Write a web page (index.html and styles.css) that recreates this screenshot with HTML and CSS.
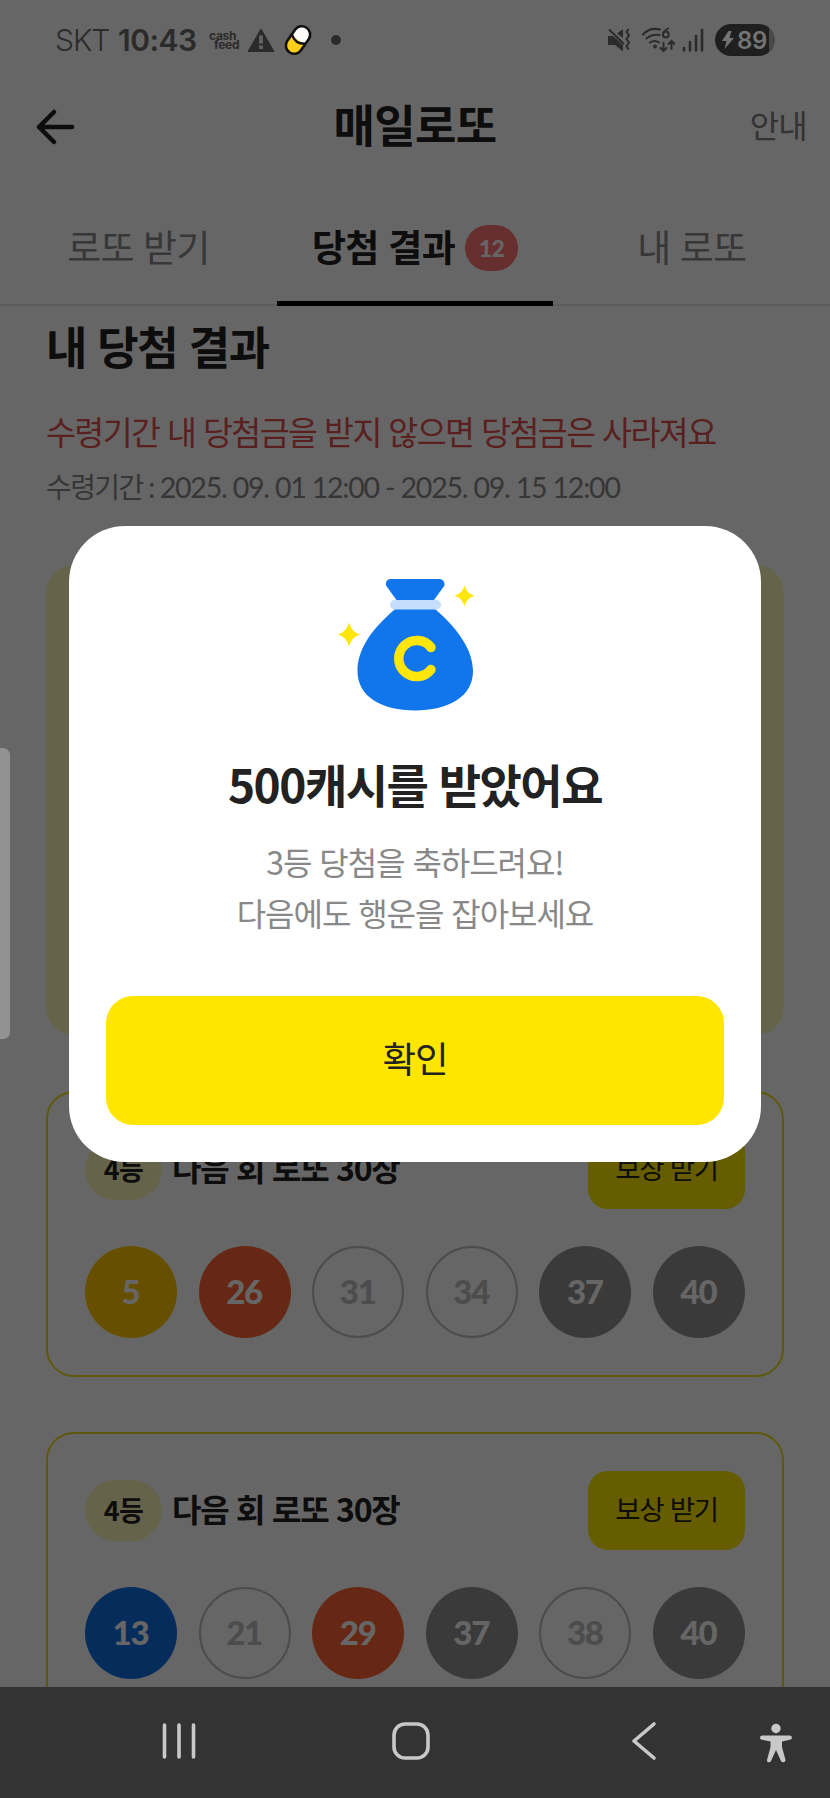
FILE: index.html
```html
<!DOCTYPE html>
<html lang="ko">
<head>
<meta charset="utf-8">
<title>매일로또</title>
<link rel="stylesheet" href="styles.css">
</head>
<body>
<div class="phone">
  <div class="screen">
    <header class="header">
      <svg class="back" viewBox="0 0 40 36" width="40" height="36"><path d="M19 3 4 18l15 15M4 18h33"/></svg>
      <h1 class="header-title">매일로또</h1>
      <span class="header-link">안내</span>
    </header>
    <nav class="tabs">
      <div class="tab">로또 받기</div>
      <div class="tab tab-active">당첨 결과<span class="badge">12</span></div>
      <div class="tab">내 로또</div>
    </nav>
    <main class="content">
      <h2 class="title">내 당첨 결과</h2>
      <p class="warning">수령기간 내 당첨금을 받지 않으면 당첨금은 사라져요</p>
      <p class="period"><span class="period-label">수령기간 :</span> 2025. 09. 01 12:00 - 2025. 09. 15 12:00</p>
      <section class="summary"></section>
      <section class="card">
        <div class="card-head">
          <span class="rank">4등</span><span class="prize">다음 회 로또 30장</span><span class="claim">보상 받기</span>
        </div>
        <div class="balls">
          <span class="ball yellow">5</span><span class="ball orange">26</span><span class="ball miss">31</span><span class="ball miss">34</span><span class="ball gray">37</span><span class="ball gray">40</span>
        </div>
      </section>
      <section class="card">
        <div class="card-head">
          <span class="rank">4등</span><span class="prize">다음 회 로또 30장</span><span class="claim">보상 받기</span>
        </div>
        <div class="balls">
          <span class="ball blue">13</span><span class="ball miss">21</span><span class="ball orange">29</span><span class="ball gray">37</span><span class="ball miss">38</span><span class="ball gray">40</span>
        </div>
      </section>
    </main>
  </div>

  <div class="overlay">
    <div class="dialog">
      <svg class="bag" viewBox="0 0 180 170" width="180" height="170">
        <path fill="#1175eb" d="M70 19h50q5 1 4.500 6.500L114 40v8c21 18 39 40 39 63 0 26-25 39.500-58 39.500S37.500 137 37.500 111c0-23 16-44 39-63v-8L66 25.500Q65 20 70 19Z"/>
        <rect x="70" y="40" width="51" height="9.500" rx="4.700" fill="#c5defb"/>
        <path d="M111 87.500a18 18 0 1 0 0 22" fill="none" stroke="#ffe60a" stroke-width="9.500" stroke-linecap="round"/>
        <path fill="#ffe60a" d="M29 62.500q2.500 9.500 11 12-8.500 2.500-11 12-2.500-9.500-11-12 8.500-2.500 11-12ZM144.500 25.500q2 8 10 10.200-8 2.300-10 10.300-2-8-10-10.300 8-2.200 10-10.200Z"/>
      </svg>
      <h3 class="dialog-title">500캐시를 받았어요</h3>
      <p class="dialog-text">3등 당첨을 축하드려요!<br>다음에도 행운을 잡아보세요</p>
      <button class="confirm">확인</button>
    </div>
  </div>

  <div class="status">
    <span class="carrier">SKT</span>
    <span class="time">10:43</span>
    <span class="cashfeed"><span>cash</span><span class="feed">feed</span></span>
    <svg class="warn" viewBox="0 0 28 24" width="28" height="24"><path d="M14 1 27 23.500H1Z" fill="#2b2b2b" stroke="#2b2b2b" stroke-linejoin="round"/><path d="M12.200 7.500h3.600v8h-3.600zM12.200 17.500h3.600v3.500h-3.600z" fill="#666"/></svg>
    <svg class="pill" viewBox="0 0 28 32" width="28" height="32"><g transform="rotate(35 14 16)"><rect x="5.700" y="1" width="16.600" height="30" rx="8.300" fill="#fff"/><path d="M5.700 16h16.600v6.700a8.300 8.300 0 0 1-16.600 0z" fill="#fdd017"/><path d="M6 15q8 6 16 0" fill="none" stroke="#111" stroke-width="2.400"/><rect x="5.700" y="1" width="16.600" height="30" rx="8.300" fill="none" stroke="#111" stroke-width="2.600"/></g></svg>
    <i class="dot"></i>
    <svg class="mute" viewBox="0 0 24 24" width="24" height="24"><path d="M1 8h5l10 9v6.500L8 17H1zM16 1v9L10 5.500z" fill="#2b2b2b"/><path d="M2 1.500l15 14.500M21.500 1l-2 3 2.500 3.500-2.500 3.500 2.500 3.500-2.500 3.500 2 3.500" fill="none" stroke="#2b2b2b" stroke-width="2"/></svg>
    <svg class="wifi" viewBox="0 0 34 26" width="34" height="26"><g fill="none" stroke="#2b2b2b" stroke-width="2" stroke-linecap="round"><path d="M2 7.500Q9 0 19 2.500M5.500 11.500Q11 6.500 18.500 8M9 15.500q4.500-3 9 0"/><path d="M27 1.500q-5 3-5 6"/><circle cx="24.800" cy="7.500" r="2.900"/><path d="M22.500 16v8m-3-3 3 3 3-3M30.500 22v-8m-3 3 3-3 3 3"/></g><circle cx="14" cy="19.500" r="1.900" fill="#2b2b2b"/></svg>
    <svg class="signal" viewBox="0 0 22 24" width="22" height="24"><path d="M2 20v2.500M8 14v8.500M14 8v14.500M20 2v20.500" stroke="#2b2b2b" stroke-width="2.600" stroke-linecap="round"/></svg>
    <span class="battery"><svg viewBox="0 0 12 18" width="12" height="18"><path d="M6.500 0 0 10h4.500L2.500 18 12 7H7.500L9.500 0Z" fill="#747474"/></svg>89</span>
  </div>

  <div class="handle"></div>

  <div class="navbar">
    <svg class="recent" viewBox="0 0 36 38" width="36" height="38"><path d="M3.500 3v32M18 3v32M32.500 3v32"/></svg>
    <svg class="home" viewBox="0 0 38 38" width="38" height="38"><rect x="2" y="2" width="34" height="34" rx="11"/></svg>
    <svg class="prev" viewBox="0 0 26 40" width="26" height="40"><path d="M23 3 3 20l20 17"/></svg>
    <svg class="person" viewBox="0 0 32 40" width="32" height="40"><circle cx="16" cy="5.500" r="4.700"/><path d="M2 12.500h28q2 .5 2 2.200t-2 2.100L22 18.500V24l3.500 13q0 2.300-2 2.300T21 38l-5-11-5 11q-.7 1.500-2.500 1.300T7 37L10.500 24v-5.500L2 16.800Q0 16.500 0 14.700t2-2.200Z"/></svg>
  </div>
</div>
</body>
</html>
```

FILE: styles.css
```css
* { box-sizing: border-box; margin: 0; padding: 0; }
body {
  font-family: "Noto Sans CJK KR", sans-serif;
  color: #222;
  background: #fff;
}
.phone { position: relative; width: 830px; height: 1798px; overflow: hidden; }
.screen { height: 1798px; padding-top: 80px; overflow: hidden; background: #fff; }

.header { display: grid; grid-template-columns: 1fr auto 1fr; align-items: center; height: 92px; padding: 0 23px; }
.back { margin: 2px 0 0 12px; fill: none; stroke: #222; stroke-width: 4.5; stroke-linecap: round; stroke-linejoin: round; }
.header-title { padding-bottom: 5px; font-size: 45px; line-height: 60px; font-weight: 700; letter-spacing: -0.7px; }
.header-link { justify-self: end; padding-bottom: 5px; font-size: 32px; line-height: 60px; letter-spacing: -0.8px; color: #808080; }

.tabs { display: flex; height: 134px; box-shadow: inset 0 -2px #e8e8ea; }
.tab { flex: 1; display: flex; justify-content: center; align-items: center; padding-top: 13px; font-size: 37px; letter-spacing: -0.9px; color: #8a8a8a; }
.tab-active { border-bottom: 5px solid #000; padding-top: 19px; font-weight: 700; font-size: 37px; letter-spacing: -0.7px; color: #222; }
.badge { display: flex; align-items: center; justify-content: center; width: 53px; height: 46px; margin: 4px 0 0 10px; border-radius: 23px; background: #ff7373; color: #fff; font: 900 23px Lato, sans-serif; letter-spacing: -0.5px; }

.content { padding: 0 46px; }
.title { margin-top: 7px; font-size: 45px; line-height: 66px; font-weight: 700; letter-spacing: -1.35px; }
.warning { margin-top: 28px; font-size: 32.500px; line-height: 48px; letter-spacing: -1.53px; color: #e05252; white-space: nowrap; }
.period { margin-top: 12px; font: 28.500px/40px Lato, "Noto Sans CJK KR", sans-serif; letter-spacing: -1.2px; color: #888; white-space: nowrap; }
.period-label { font-size: 28px; letter-spacing: -1.6px; }
.summary { height: 470px; margin-top: 58px; border-radius: 28px; background: #fff8bb; }
.card { height: 286px; margin-top: 55px; padding: 37px 37px 0; border: 2px solid #ecdc20; border-radius: 28px; }
.summary + .card { margin-top: 56px; }
.card-head { display: flex; align-items: center; }
.rank { display: flex; justify-content: center; align-items: center; width: 77px; height: 61px; padding-bottom: 3px; border-radius: 31px; background: #fff8bb; font-size: 27px; font-weight: 700; letter-spacing: -0.6px; }
.prize { margin-left: 10px; padding-bottom: 5px; font-size: 32px; font-weight: 700; letter-spacing: -1.25px; }
.claim { display: flex; justify-content: center; align-items: center; width: 157px; height: 79px; margin-left: auto; padding-bottom: 5px; border-radius: 20px; background: #ffe600; font-size: 27.500px; letter-spacing: -1.3px; }
.balls { display: flex; justify-content: space-between; margin-top: 37px; }
.ball { display: flex; justify-content: center; align-items: center; width: 92px; height: 92px; padding: 0 1px 3px 0; border-radius: 50%; color: #fff; font: 900 33px Lato, sans-serif; letter-spacing: -1.2px; }
.yellow { background: #ffc800; }
.orange { background: #ff6432; }
.blue { background: #0f6ee6; }
.gray { background: #929292; }
.miss { border: 2px solid #bebebe; color: #bebebe; }

.overlay { position: absolute; inset: 0; display: flex; justify-content: center; align-items: flex-start; padding-top: 526px; background: rgba(0, 0, 0, 0.6); }
.dialog { display: flex; flex-direction: column; align-items: center; width: 692px; height: 636px; padding: 34px 37px 0; border-radius: 56px; background: #fff; }
.bag { margin-left: -11px; }
.dialog-title { margin-top: 20px; font-size: 46px; line-height: 66px; font-weight: 700; letter-spacing: -1.5px; }
.dialog-text { margin-top: 20px; font-size: 32px; line-height: 50.500px; text-align: center; letter-spacing: -1.05px; color: #888; }
.confirm { width: 618px; height: 129px; margin-top: 59px; padding-bottom: 7px; border: 0; border-radius: 27px; background: #ffe600; color: #222; font: inherit; font-size: 36.500px; letter-spacing: -1px; }

.status { position: absolute; inset: 0 0 auto; display: flex; align-items: center; height: 80px; padding-left: 55px; color: #2b2b2b; }
.carrier { width: 63px; font: 300 30px Inter, sans-serif; letter-spacing: -1px; }
.time { width: 91px; font: 600 30px Inter, sans-serif; letter-spacing: -0.5px; }
.cashfeed { display: flex; flex-direction: column; width: 38px; font: 700 12px/9px Inter, sans-serif; letter-spacing: -0.3px; }
.feed { margin-left: 5px; }
.pill { margin-left: 9px; }
.dot { width: 10px; height: 10px; margin-left: 19px; border-radius: 50%; background: #2b2b2b; }
.mute { margin-left: 266px; }
.wifi { margin-left: 10px; }
.signal { margin-left: 7px; }
.battery { display: flex; align-items: center; gap: 3px; width: 60px; height: 32px; margin-left: 11px; padding-left: 7px; border-radius: 16px; background: linear-gradient(90deg, #1f1f1f 54px, #484848 54px); color: #747474; font: 600 24px Inter, sans-serif; letter-spacing: -0.3px; }

.handle { position: absolute; left: 0; top: 748px; width: 10px; height: 291px; border-radius: 0 7px 7px 0; background: #929292; }

.navbar { position: absolute; inset: auto 0 0; display: flex; align-items: center; height: 111px; padding: 0 38px 4px 161px; background: #333; }
.recent, .home, .prev { fill: none; stroke: #c8c8c8; stroke-width: 3.6; stroke-linecap: round; stroke-linejoin: round; }
.home { margin-left: 195px; }
.prev { margin-left: 201px; }
.person { margin: 5px 0 0 auto; fill: #c8c8c8; }
```
